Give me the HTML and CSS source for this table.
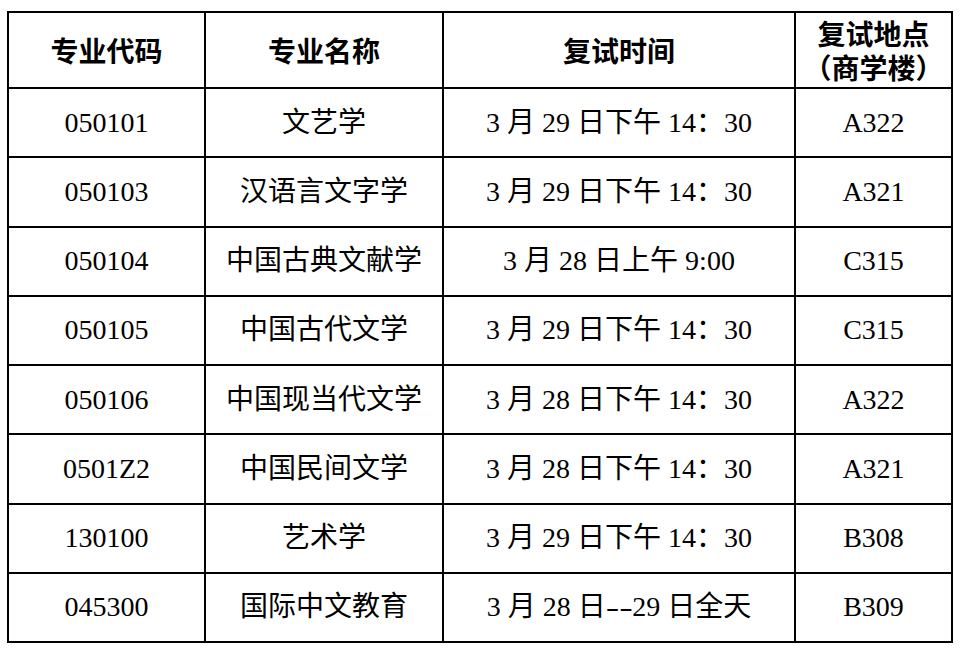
FILE: index.html
```html
<!DOCTYPE html>
<html lang="zh-CN">
<head>
<meta charset="utf-8">
<title>复试安排</title>
<link rel="stylesheet" href="styles.css">
</head>
<body>
<table class="schedule">
  <colgroup>
    <col class="c-code">
    <col class="c-name">
    <col class="c-time">
    <col class="c-place">
  </colgroup>
  <thead>
    <tr class="head">
      <th>专业代码</th>
      <th>专业名称</th>
      <th>复试时间</th>
      <th class="two">复试地点<br>（商学楼）</th>
    </tr>
  </thead>
  <tbody>
    <tr><td>050101</td><td>文艺学</td><td>3 月 29 日下午 14：30</td><td>A322</td></tr>
    <tr><td>050103</td><td>汉语言文字学</td><td>3 月 29 日下午 14：30</td><td>A321</td></tr>
    <tr><td>050104</td><td>中国古典文献学</td><td>3 月 28 日上午 9:00</td><td>C315</td></tr>
    <tr><td>050105</td><td>中国古代文学</td><td>3 月 29 日下午 14：30</td><td>C315</td></tr>
    <tr><td>050106</td><td>中国现当代文学</td><td>3 月 28 日下午 14：30</td><td>A322</td></tr>
    <tr><td>0501Z2</td><td>中国民间文学</td><td>3 月 28 日下午 14：30</td><td>A321</td></tr>
    <tr><td>130100</td><td>艺术学</td><td>3 月 29 日下午 14：30</td><td>B308</td></tr>
    <tr><td>045300</td><td>国际中文教育</td><td>3 月 28 日<span class="dash">--</span>29 日全天</td><td>B309</td></tr>
  </tbody>
</table>
</body>
</html>
```
FILE: styles.css
```css
html, body {
  margin: 0;
  padding: 0;
  background: #ffffff;
}

body {
  padding: 11px 0 0 7px;
  font-family: "Liberation Serif", "Noto Sans CJK SC", serif;
  color: #000000;
}

.schedule {
  border-collapse: collapse;
  table-layout: fixed;
  width: 944px;
}

.c-code { width: 197px; }
.c-name { width: 238px; }
.c-time { width: 352px; }
.c-place { width: 157px; }

.schedule th,
.schedule td {
  border: 2px solid #000000;
  padding: 0;
  text-align: center;
  vertical-align: middle;
  font-size: 28px;
  line-height: 34px;
}

.schedule th {
  font-family: "Noto Sans CJK SC", sans-serif;
  font-weight: 700;
}

.head {
  height: 76px;
}

.schedule tbody tr {
  height: 69.25px;
}

.dash {
  display: inline-block;
  transform: scaleX(1.45);
  margin: 0 4px;
}
```
